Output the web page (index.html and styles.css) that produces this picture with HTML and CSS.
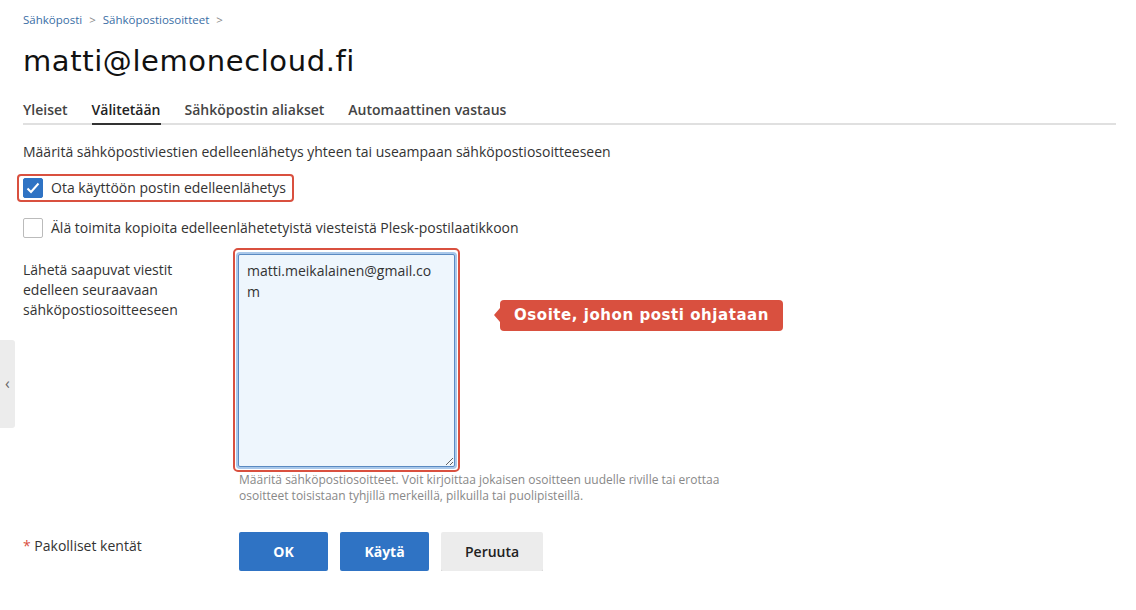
FILE: index.html
```html
<!DOCTYPE html>
<html lang="fi">
<head>
  <meta charset="UTF-8">
  <title>matti@lemonecloud.fi</title>
  <link rel="stylesheet" href="styles.css">
</head>
<body>

<div class="side-toggle">&#8249;</div>

<div class="page">
  <div class="breadcrumbs">
    <a href="#">Sähköposti</a> <span class="sep">&gt;</span>
    <a href="#">Sähköpostiosoitteet</a> <span class="sep">&gt;</span>
  </div>

  <h1>matti@lemonecloud.fi</h1>

  <ul class="tabs">
    <li>Yleiset</li>
    <li class="active">Välitetään</li>
    <li>Sähköpostin aliakset</li>
    <li>Automaattinen vastaus</li>
  </ul>

  <p class="intro">Määritä sähköpostiviestien edelleenlähetys yhteen tai useampaan sähköpostiosoitteeseen</p>

  <div class="check-row">
    <label class="check mark">
      <span class="box checked">
        <svg width="14" height="12" viewBox="0 0 14 12"><path d="M1.5 6.5 L5 10 L12.5 1.5" fill="none" stroke="#fff" stroke-width="2"/></svg>
      </span>
      Ota käyttöön postin edelleenlähetys
    </label>
  </div>

  <div class="check-row">
    <label class="check">
      <span class="box"></span>
      Älä toimita kopioita edelleenlähetetyistä viesteistä Plesk-postilaatikkoon
    </label>
  </div>

  <div class="form-row">
    <div class="form-label">Lähetä saapuvat viestit edelleen seuraavaan sähköpostiosoitteeseen</div>
    <div class="form-field">
      <div class="mark area-mark">
        <textarea>matti.meikalainen@gmail.com</textarea>
      </div>
      <div class="callout">Osoite, johon posti ohjataan</div>
      <div class="hint">Määritä sähköpostiosoitteet. Voit kirjoittaa jokaisen osoitteen uudelle riville tai erottaa osoitteet toisistaan tyhjillä merkeillä, pilkuilla tai puolipisteillä.</div>
    </div>
  </div>

  <div class="form-row buttons-row">
    <div class="form-label required"><span class="star">*</span> Pakolliset kentät</div>
    <div class="buttons">
      <button class="btn primary">OK</button>
      <button class="btn primary">Käytä</button>
      <button class="btn">Peruuta</button>
    </div>
  </div>
</div>

</body>
</html>
```

FILE: styles.css
```css
body {
  margin: 0;
  font-family: "Open Sans", sans-serif;
  color: #333;
  background: #fff;
}

.page {
  padding: 11px 20px 0 23px;
  width: 1093px;
}

.side-toggle {
  position: absolute;
  left: 0;
  top: 340px;
  width: 15px;
  height: 88px;
  background: #ececec;
  border-radius: 0 3px 3px 0;
  color: #666;
  font-size: 16px;
  line-height: 86px;
  text-align: center;
}

.breadcrumbs {
  font-size: 11.5px;
  line-height: 18px;
}

.breadcrumbs a {
  color: #3a6ea5;
  text-decoration: none;
}

.breadcrumbs .sep {
  color: #888;
  margin: 0 4px;
}

h1 {
  font-family: "DejaVu Sans", sans-serif;
  font-weight: normal;
  font-size: 29px;
  color: #111;
  margin: 15px 0 0;
  line-height: 34px;
  letter-spacing: 0.6px;
}

.tabs {
  list-style: none;
  display: flex;
  gap: 24px;
  margin: 22px 0 0;
  padding: 0;
  border-bottom: 2px solid #e0e0e0;
}

.tabs li {
  font-size: 14px;
  font-weight: 600;
  color: #444;
  padding: 0 0 4px;
  margin-bottom: -2px;
  border-bottom: 2px solid transparent;
}

.tabs li.active {
  color: #222;
  border-bottom-color: #333;
}

.intro {
  font-size: 14px;
  margin: 17px 0 0;
  line-height: 20px;
}

.check-row {
  margin-top: 12px;
  height: 26px;
}

.check-row + .check-row {
  margin-top: 14px;
}

.check {
  display: inline-flex;
  align-items: center;
  gap: 8px;
  font-size: 14px;
  line-height: 20px;
  border: 2px solid transparent;
  padding: 2px 6px 2px 4px;
  margin-left: -6px;
  border-radius: 4px;
}

.mark {
  border: 2px solid #d9503f;
  border-radius: 4px;
}

.box {
  width: 18px;
  height: 18px;
  border: 1px solid #bbb;
  border-radius: 2px;
  background: #fff;
  display: flex;
  align-items: center;
  justify-content: center;
}

.box.checked {
  background: #2f73c4;
  border-color: #2f73c4;
}

.form-row {
  display: flex;
  margin-top: 8px;
}

.form-label {
  width: 180px;
  padding-right: 30px;
  font-size: 14px;
  line-height: 20px;
  padding-top: 12px;
  flex: none;
}

.form-field {
  position: relative;
  width: 500px;
}

.area-mark {
  width: 217px;
  padding: 4px 3px 3px;
  border-radius: 5px;
}

textarea {
  display: block;
  box-sizing: border-box;
  width: 217px;
  height: 213px;
  resize: both;
  font-family: "Open Sans", sans-serif;
  font-size: 14px;
  line-height: 21px;
  color: #333;
  padding: 5px 14px 6px 8px;
  background: #eef6fd;
  border: 1px solid #5a8ac2;
  box-shadow: 0 0 0 2px #a9c8ea;
  border-radius: 2px;
  outline: none;
  word-break: break-all;
}

.callout {
  position: absolute;
  left: 267px;
  top: 52px;
  background: #d9503f;
  color: #fff;
  font-family: "DejaVu Sans", sans-serif;
  font-weight: bold;
  font-size: 15px;
  line-height: 31px;
  padding: 0 14px;
  border-radius: 4px;
  letter-spacing: 0.55px;
  white-space: nowrap;
}

.callout::before {
  content: "";
  position: absolute;
  left: -6px;
  top: 8px;
  border-style: solid;
  border-color: transparent #d9503f transparent transparent;
  border-width: 7px 6px 7px 0;
}

.hint {
  font-size: 12px;
  line-height: 16px;
  color: #888;
  margin: 0 0 0 6px;
  width: 490px;
}

.buttons-row {
  margin-top: 28px;
}

.buttons-row .form-label {
  padding-top: 4px;
}

.star {
  color: #d9503f;
}

.buttons {
  display: flex;
  gap: 12px;
  padding-left: 6px;
}

.btn {
  font-family: "Open Sans", sans-serif;
  font-size: 14px;
  font-weight: 600;
  height: 39px;
  min-width: 89px;
  padding: 0 24px;
  border: none;
  border-radius: 2px;
  background: #ececec;
  color: #222;
  box-shadow: 0 2px 0 #d0d0d0;
}

.btn.primary {
  background: #2f73c4;
  color: #fff;
  font-weight: bold;
  box-shadow: none;
}
```
